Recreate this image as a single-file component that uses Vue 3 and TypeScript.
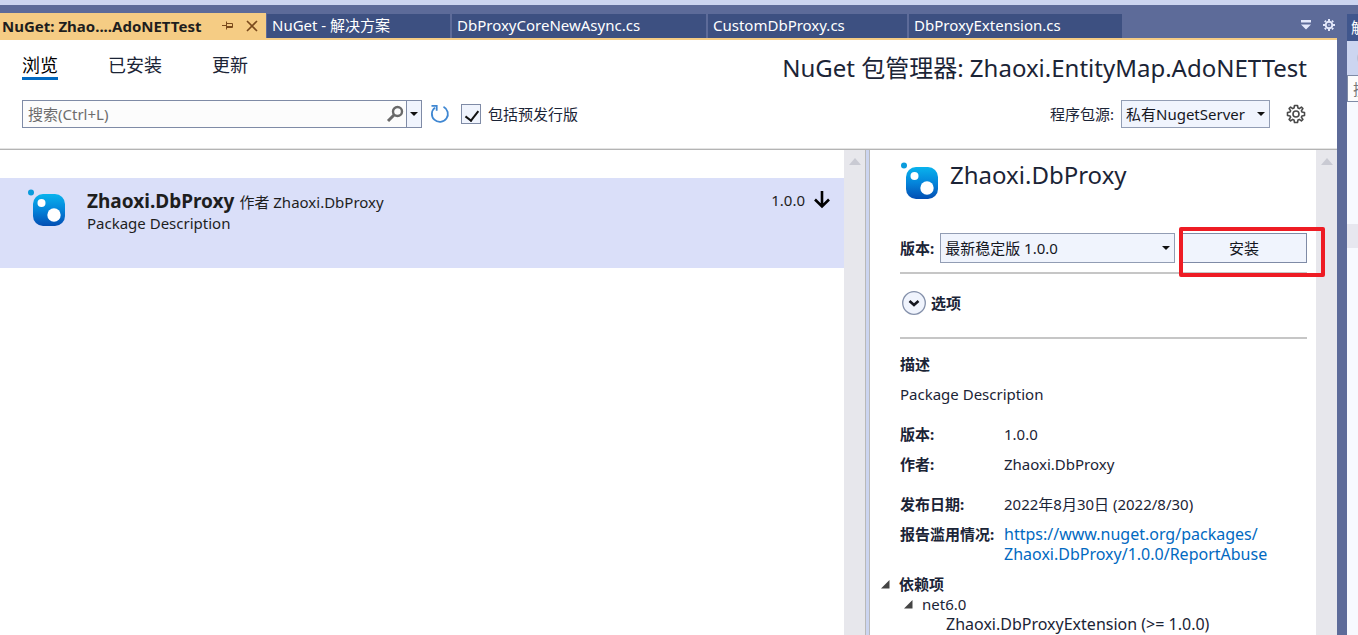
<script setup lang="ts">
import { ref } from 'vue'

interface DocTab {
  title: string
  size: string
}

const tabs: DocTab[] = [
  { title: 'NuGet - 解决方案', size: 'w-a' },
  { title: 'DbProxyCoreNewAsync.cs', size: 'w-b' },
  { title: 'CustomDbProxy.cs', size: 'w-c' },
  { title: 'DbProxyExtension.cs', size: 'w-d' },
]
const views: string[] = ['浏览', '已安装', '更新']
const activeView = ref('浏览')
const query = ref('')
const prerelease = ref(true)
const source = ref('私有NugetServer')
const version = ref('最新稳定版 1.0.0')
</script>

<template>
  <div class="ide">
    <div class="strip"></div>
    <div class="shell">
      <main class="doc">
        <nav class="tabs" aria-label="文档">
          <div class="tab active">
            <span class="tab-title">NuGet: Zhao....AdoNETTest</span>
            <button class="bare" aria-label="固定">
              <svg width="12" height="12" viewBox="0 0 12 12" fill="none" stroke="#7a4a1c">
                <path d="M0 5.500h4M4.500 1.500v8M4.500 3.500h6v4h-6M4.500 6.500h6" />
              </svg>
            </button>
            <button class="bare close" aria-label="关闭">
              <svg width="12" height="12" viewBox="0 0 12 12" stroke="#7a4a1c" stroke-width="1.600">
                <path d="M1 1l10 10M11 1L1 11" />
              </svg>
            </button>
          </div>
          <button v-for="t in tabs" :key="t.title" class="tab" :class="t.size">{{ t.title }}</button>
          <div class="tab-tools">
            <button class="bare" aria-label="窗口列表">
              <svg width="10" height="10" viewBox="0 0 10 10" fill="#e3e8fb"><path d="M0 0h10v2.500H0zM0 4.500h10L5 9.500z" /></svg>
            </button>
            <button class="bare" aria-label="选项">
              <svg width="12" height="12" viewBox="-6 -6 12 12" fill="none" stroke="#e3e8fb">
                <circle r="3.300" stroke-width="1.900" />
                <circle r=".7" fill="#e3e8fb" stroke="none" />
                <path stroke-width="2" d="M0-6v2M0 6V4M-6 0h2M6 0H4M-4.200-4.200l1.200 1.200M4.200 4.200L3 3M-4.200 4.200L-3 3M4.200-4.200L3-3" />
              </svg>
            </button>
          </div>
        </nav>

        <header class="head">
          <div class="head-row">
            <div class="views">
              <button v-for="v in views" :key="v" class="view" :class="{ on: v === activeView }" @click="activeView = v">{{ v }}</button>
            </div>
            <h1>NuGet 包管理器: Zhaoxi.EntityMap.AdoNETTest</h1>
          </div>
          <div class="head-row tools">
            <div class="search">
              <input v-model="query" type="text" placeholder="搜索(Ctrl+L)" aria-label="搜索" />
              <button class="bare mag" aria-label="开始搜索">
                <svg width="18" height="18" viewBox="0 0 18 18" fill="none" stroke="#6a6a6a">
                  <circle cx="11.500" cy="6.500" r="4.500" stroke-width="2.400" /><path d="M8 10L2 16" stroke-width="3" />
                </svg>
              </button>
              <button class="bare drop" aria-label="搜索历史">
                <svg width="8" height="4" viewBox="0 0 8 4"><path d="M0 0h8L4 4z" fill="#111" /></svg>
              </button>
            </div>
            <button class="bare refresh" aria-label="刷新">
              <svg width="20" height="20" viewBox="0 0 20 20" fill="none" stroke="#3f87d2" stroke-width="1.800">
                <path d="M13.500 2.800A8 8 0 1 1 5 3.600" /><path d="M1.500 1.800h5.200v5" />
              </svg>
            </button>
            <label class="check">
              <input v-model="prerelease" type="checkbox" />
              <span>包括预发行版</span>
            </label>
            <div class="source">
              <label for="src">程序包源:</label>
              <div class="combo src">
                <select id="src" v-model="source"><option>私有NugetServer</option></select>
                <svg class="caret" width="8" height="4" viewBox="0 0 8 4"><path d="M0 0h8L4 4z" fill="#111" /></svg>
              </div>
              <button class="bare" aria-label="设置">
                <svg width="20" height="20" viewBox="-10 -10 20 20" fill="none" stroke="#4a4a4a" stroke-width="1.600" stroke-linejoin="round">
                  <path d="M-1.500-8.500h3l.5 2.600 1.300.5 2.100-1.500 1.500 1.500-1.500 2.100.5 1.300 2.600.5v3l-2.600.5-.5 1.300 1.500 2.100-1.500 1.500-2.100-1.500-1.300.5-.5 2.600h-3l-.5-2.600-1.300-.5-2.100 1.500-1.500-1.500 1.500-2.100-.5-1.300-2.600-.5v-3l2.600-.5.5-1.300-1.500-2.100 1.500-1.500 2.100 1.500 1.300-.5z" />
                  <circle r="3" />
                </svg>
              </button>
            </div>
          </div>
        </header>

        <div class="body">
          <section class="list" aria-label="程序包">
            <article class="item">
              <svg class="logo" width="40" height="40" viewBox="0 0 40 40">
                <defs><linearGradient id="g1" x2="0" y2="1"><stop stop-color="#09b3ed" /><stop offset=".5" stop-color="#0484da" /><stop offset="1" stop-color="#034eb3" /></linearGradient></defs>
                <circle cx="4" cy="3.500" r="3" fill="#0a9bdc" />
                <rect x="6" y="5" width="32" height="32" rx="10" fill="url(#g1)" />
                <circle cx="14.500" cy="14" r="4" fill="#fff" /><circle cx="27" cy="26" r="6.700" fill="#fff" />
              </svg>
              <div class="info">
                <div><strong>Zhaoxi.DbProxy</strong><span>作者 Zhaoxi.DbProxy</span></div>
                <p>Package Description</p>
              </div>
              <div class="ver">
                <span>1.0.0</span>
                <button class="bare" aria-label="安装 Zhaoxi.DbProxy">
                  <svg width="16" height="18" viewBox="0 0 16 18" fill="none" stroke="#000" stroke-width="2.600"><path d="M8 0v16M1 8.500l7 7 7-7" /></svg>
                </button>
              </div>
            </article>
          </section>
          <div class="scroll"><svg width="12" height="7" viewBox="0 0 12 7"><path d="M6 0l6 7H0z" fill="#c9cad3" /></svg></div>
          <div class="splitter"></div>
          <section class="detail" aria-label="程序包详细信息">
            <div class="title">
              <svg width="40" height="40" viewBox="0 0 40 40">
                <defs><linearGradient id="g2" x2="0" y2="1"><stop stop-color="#09b3ed" /><stop offset=".5" stop-color="#0484da" /><stop offset="1" stop-color="#034eb3" /></linearGradient></defs>
                <circle cx="4" cy="3.500" r="3" fill="#0a9bdc" />
                <rect x="6" y="5" width="32" height="32" rx="10" fill="url(#g2)" />
                <circle cx="14.500" cy="14" r="4" fill="#fff" /><circle cx="27" cy="26" r="6.700" fill="#fff" />
              </svg>
              <h2>Zhaoxi.DbProxy</h2>
            </div>
            <div class="pick">
              <label for="ver">版本:</label>
              <div class="combo wide">
                <select id="ver" v-model="version"><option>最新稳定版 1.0.0</option></select>
                <svg class="caret" width="8" height="4" viewBox="0 0 8 4"><path d="M0 0h8L4 4z" fill="#111" /></svg>
              </div>
              <div class="install-wrap">
                <button class="install">安装</button>
                <span class="mark"></span>
              </div>
            </div>
            <hr />
            <button class="options">
              <svg width="24" height="24" viewBox="0 0 24 24" fill="none"><circle cx="12" cy="12" r="11.300" fill="#f0f4fd" stroke="#8591ab" stroke-width="1.300" /><path d="M7.500 10l4.500 4 4.500-4" stroke="#15171f" stroke-width="2.600" /></svg>
              选项
            </button>
            <hr />
            <h3>描述</h3>
            <p class="desc">Package Description</p>
            <dl>
              <dt>版本:</dt><dd>1.0.0</dd>
              <dt>作者:</dt><dd>Zhaoxi.DbProxy</dd>
              <dt class="far">发布日期:</dt><dd class="far">2022年8月30日 (2022/8/30)</dd>
              <dt>报告滥用情况:</dt>
              <dd><a href="https://www.nuget.org/packages/Zhaoxi.DbProxy/1.0.0/ReportAbuse">https://www.nuget.org/packages/<wbr />Zhaoxi.DbProxy/1.0.0/ReportAbuse</a></dd>
            </dl>
            <ul class="tree">
              <li class="root"><svg width="9" height="9" viewBox="0 0 9 9"><path d="M8.500 0v8.500H0z" fill="#444" /></svg><strong>依赖项</strong></li>
              <li class="fw"><svg width="9" height="9" viewBox="0 0 9 9"><path d="M8.500 0v8.500H0z" fill="#444" /></svg>net6.0</li>
              <li class="dep">Zhaoxi.DbProxyExtension (&gt;= 1.0.0)</li>
            </ul>
          </section>
          <div class="scroll"><svg width="12" height="7" viewBox="0 0 12 7"><path d="M6 0l6 7H0z" fill="#c9cad3" /></svg></div>
        </div>
      </main>

      <aside class="side">
        <div class="side-title">解决方案</div>
        <div class="side-bar"><svg width="18" height="18" viewBox="0 0 18 18"><circle cx="9" cy="9" r="7" fill="#b9bfd2" /></svg></div>
        <input class="side-search" type="text" placeholder="搜索" aria-label="搜索解决方案" />
        <div class="side-row"></div>
      </aside>
    </div>
  </div>
</template>

<style>
body {
  margin: 0;
}
</style>

<style scoped>
* {
  box-sizing: border-box;
}
.ide {
  height: 100vh;
  display: flex;
  flex-direction: column;
  overflow: hidden;
  background: #5d6b99;
  color: #1b2436;
  font: 15px/20px "Noto Sans", "Noto Sans CJK SC", sans-serif;
}
button, input, select {
  font: inherit;
  color: inherit;
  margin: 0;
}
svg {
  display: block;
  flex: none;
}
h1, h2, h3, p, dl, dd, ul {
  margin: 0;
  padding: 0;
  font-weight: 400;
}
.bare {
  border: 0;
  padding: 0;
  background: none;
  display: flex;
  align-items: center;
  justify-content: center;
}
.strip {
  height: 5px;
  flex: none;
  background: #ccd5f0;
}
.shell {
  flex: 1;
  min-height: 0;
  display: flex;
  gap: 10px;
}
.doc {
  flex: 1;
  min-width: 0;
  display: flex;
  flex-direction: column;
}
.tabs {
  display: flex;
  gap: 2px;
  padding-top: 8px;
  height: 35px;
  flex: none;
  border-bottom: 2px solid #f5cc84;
}
.tab {
  height: 24px;
  border: 0;
  padding: 0 5px 2px;
  background: #3d5081;
  color: #fff;
  text-align: left;
  white-space: nowrap;
  margin-top: 1px;
}
.tab.active {
  width: 266px;
  height: 26px;
  margin-top: 0;
  margin-right: -1px;
  padding: 0 8px 0 2px;
  display: flex;
  align-items: center;
  background: #f5cc84;
  color: #1e1e1e;
  font-weight: 700;
}
.tab-title {
  flex: 1;
}
.close {
  margin-left: 12px;
}
.w-a { width: 183px; }
.w-b { width: 254px; }
.w-c { width: 199px; }
.w-d { width: 213px; }
.tab-tools {
  margin-left: auto;
  display: flex;
  gap: 12px;
  padding: 0 2px 2px 0;
}
.head {
  flex: none;
  height: 110px;
  padding: 12px 30px 0 22px;
  background: #fff;
  border-bottom: 1px solid #b4b4b4;
  box-shadow: inset 0 -1px #e4e4e4;
}
.head-row {
  display: flex;
  align-items: center;
  justify-content: space-between;
}
.views {
  display: flex;
  gap: 50px;
  align-self: flex-start;
}
.view {
  border: 0;
  border-bottom: 3px solid transparent;
  padding: 0;
  height: 28px;
  background: none;
  font-size: 18px;
  line-height: 24px;
}
.view.on {
  color: #000;
  border-color: #0169c1;
}
h1 {
  font-size: 24px;
  line-height: 32px;
}
.tools {
  margin-top: 16px;
  height: 28px;
  justify-content: flex-start;
}
.search {
  width: 400px;
  height: 28px;
  display: flex;
  border: 1px solid #7f8ba6;
  background: #fcfcfc;
}
.search input {
  flex: 1;
  min-width: 0;
  border: 0;
  padding: 0 5px;
  background: none;
}
.search input::placeholder {
  color: #6d6d6d;
}
.mag {
  width: 22px;
}
.drop {
  width: 15px;
  background: #f0f4fd;
  border-left: 1px solid #7f8ba6;
}
.refresh {
  margin-left: 8px;
}
.check {
  display: flex;
  align-items: center;
  gap: 7px;
  margin-left: 11px;
}
.check input {
  appearance: none;
  width: 20px;
  height: 20px;
  border: 1px solid #7f8ba6;
  background: #f0f4fd;
  position: relative;
}
.check input:checked::after {
  content: "";
  position: absolute;
  left: 6px;
  top: 3px;
  width: 6px;
  height: 11px;
  border: solid #111;
  border-width: 0 2px 2px 0;
  transform: rotate(38deg);
}
.source {
  display: flex;
  align-items: center;
  margin-left: auto;
  gap: 7px;
}
.source .bare {
  margin: 0 1px 0 9px;
}
.combo {
  position: relative;
}
.combo select {
  appearance: none;
  width: 100%;
  height: 100%;
  border: 1px solid #929db4;
  border-radius: 0;
  background: #f0f4fd;
  padding: 0 16px 0 4px;
  color: #15171f;
}
.caret {
  position: absolute;
  right: 5px;
  top: 50%;
  margin-top: -2px;
  pointer-events: none;
}
.src {
  width: 149px;
  height: 28px;
}
.body {
  flex: 1;
  min-height: 0;
  display: grid;
  grid-template-columns: 844fr 21px 5px 446fr 21px;
  background: #fff;
}
.list {
  padding-top: 28px;
}
.item {
  display: flex;
  height: 90px;
  padding: 11px 14px 0 27px;
  background: #dadff9;
  color: #1e1e1e;
}
.info {
  margin-left: 20px;
}
.info strong {
  font-size: 19px;
  line-height: 24px;
  margin-right: 5px;
}
.ver {
  margin-left: auto;
  display: flex;
  gap: 9px;
  height: 22px;
  align-items: center;
}
.scroll {
  background: #e7e7ec;
  padding: 8px 0 0 5px;
}
.splitter {
  background: #ccd5f0;
  border: solid #b9b9b9;
  border-width: 0 1px;
}
.detail {
  padding: 12px 9px 0 30px;
  min-width: 0;
}
.title {
  display: flex;
  gap: 10px;
  height: 40px;
}
h2 {
  font-size: 24px;
  line-height: 26px;
}
.pick {
  display: flex;
  align-items: center;
  margin-top: 31px;
  gap: 6px;
}
.pick label, .options, h3, dt {
  font-weight: 700;
}
h3 {
  font-size: 15px;
  line-height: 20px;
}
.pick .wide {
  flex: 1;
  height: 30px;
}
.install-wrap {
  width: 126px;
  position: relative;
}
.install {
  width: 100%;
  height: 30px;
  border: 1px solid #7f8ba6;
  background: #f0f4fd;
  padding: 0;
  color: #15171f;
  display: block;
}
.mark {
  position: absolute;
  inset: -6px -18px -14px -2px;
  border: 4px solid #ee1c24;
  border-radius: 2px;
  pointer-events: none;
}
hr {
  margin: 9px 0 17px;
  border: 0;
  height: 2px;
  background: #c6c6c6;
}
.options {
  display: flex;
  align-items: center;
  gap: 5px;
  border: 0;
  background: none;
  padding: 0 0 0 2px;
  margin-bottom: 22px;
}
hr + h3 {
  margin-top: -2px;
}
.desc {
  margin: 10px 0 20px;
}
dl {
  display: grid;
  grid-template-columns: 104px 1fr;
  row-gap: 10px;
}
dt {
  white-space: nowrap;
}
.far {
  margin-top: 10px;
}
a {
  color: #0169c1;
  text-decoration: none;
}
a, .dep {
  font-size: 16px;
}
dd a {
  display: block;
}
.tree {
  list-style: none;
  margin-top: 10px;
}
.tree li {
  display: flex;
  align-items: center;
  gap: 9px;
  white-space: nowrap;
}
.tree .root {
  margin-left: -19px;
}
.tree .fw {
  margin-left: 4px;
}
.tree .dep {
  margin-left: 46px;
}
.side {
  width: 11px;
  margin-top: 9px;
  overflow: hidden;
  background: #f7f9fe;
  white-space: nowrap;
}
.side-title {
  height: 27px;
  padding-left: 4px;
  line-height: 26px;
  background: #40568d;
  color: #fff;
}
.side-bar {
  height: 34px;
  padding: 8px 0 0 8px;
  background: #ccd5f0;
}
.side-search {
  display: block;
  width: 200px;
  height: 27px;
  border: 1px solid #7f8ba6;
  padding: 0 5px;
  background: #fcfcfc;
}
.side-row {
  height: 24px;
  margin-top: 122px;
  background: #e7e7ef;
}
</style>
